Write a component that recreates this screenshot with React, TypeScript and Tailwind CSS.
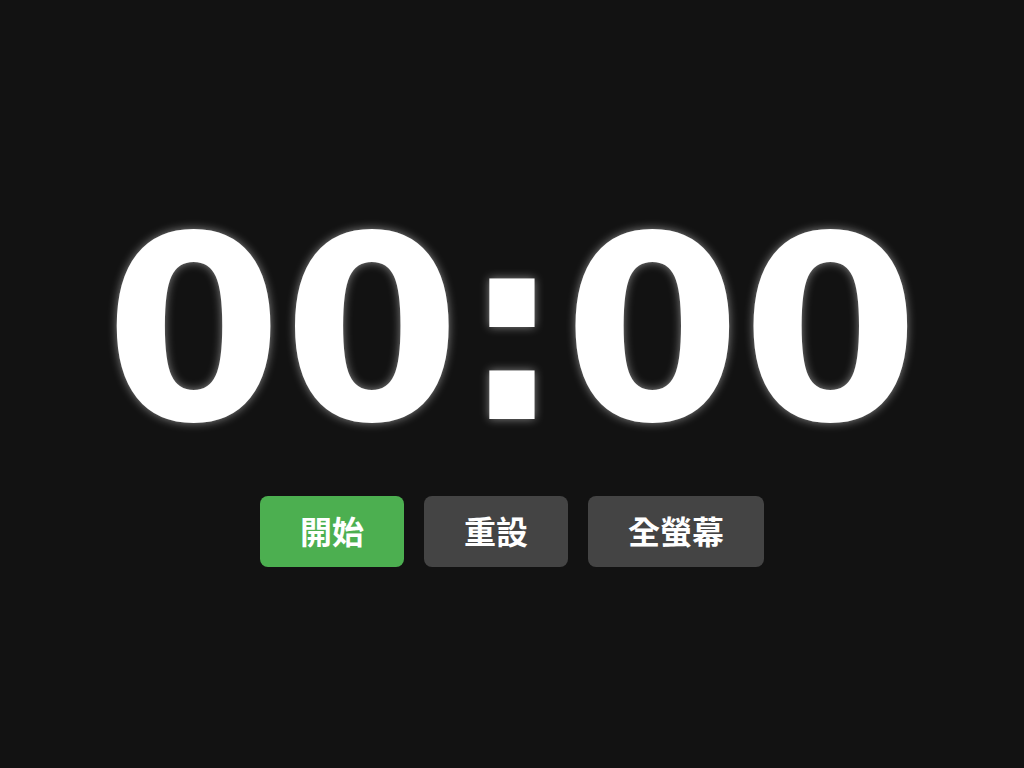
import { useState } from 'react'

export default function App() {
  const [seconds] = useState(0)
  const mm = String(Math.floor(seconds / 60)).padStart(2, '0')
  const ss = String(seconds % 60).padStart(2, '0')

  return (
    <div className="flex h-screen w-full flex-col items-center justify-center bg-[#121212] text-white">
      {/* Timer */}
      <div
        className="mb-[38px] text-[256px] font-bold leading-none [text-shadow:0_0_10px_rgba(255,255,255,0.5)]"
        style={{ fontFamily: '"DejaVu Sans", sans-serif' }}
      >
        {mm}:{ss}
      </div>

      {/* Controls */}
      <div
        className="flex gap-5"
        style={{ fontFamily: '"Noto Sans CJK TC", "Noto Sans", sans-serif' }}
      >
        <button className="h-[71px] rounded-lg bg-[#4caf50] px-10 pb-[3px] text-[32px] font-bold text-white">
          開始
        </button>
        <button className="h-[71px] rounded-lg bg-[#444444] px-10 pb-[3px] text-[32px] font-bold text-white">
          重設
        </button>
        <button className="h-[71px] rounded-lg bg-[#444444] px-10 pb-[3px] text-[32px] font-bold text-white">
          全螢幕
        </button>
      </div>
    </div>
  )
}
